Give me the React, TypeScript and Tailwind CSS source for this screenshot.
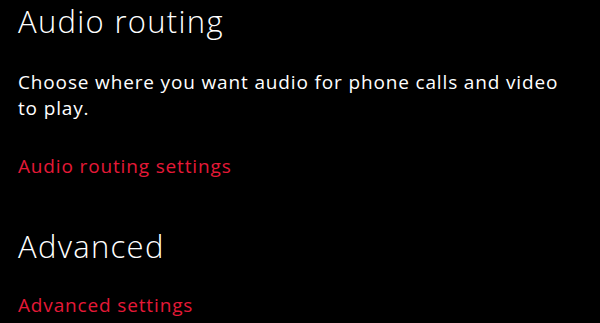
import React from 'react';

const App: React.FC = () => {
  return (
    <div className="w-[600px] h-[323px] overflow-hidden bg-black pl-[18px] text-white" style={{ fontFamily: '"Open Sans", "Noto Sans", sans-serif' }}>
      <h1 className="mt-[6px] text-[31px] leading-[31px] font-light tracking-[1.3px]">Audio routing</h1>
      <p className="mt-[32px] text-[19px] leading-[26px] tracking-[0.85px]">
        Choose where you want audio for phone calls and video
        <br />
        to play.
      </p>
      <a className="mt-[32px] block text-[19px] leading-[26px] tracking-[0.85px] text-[#e51937]">Audio routing settings</a>
      <h2 className="mt-[52px] text-[31px] leading-[31px] font-light tracking-[1.3px]">Advanced</h2>
      <a className="mt-[30px] block text-[19px] leading-[26px] tracking-[0.85px] text-[#e51937]">Advanced settings</a>
    </div>
  );
};

export default App;
